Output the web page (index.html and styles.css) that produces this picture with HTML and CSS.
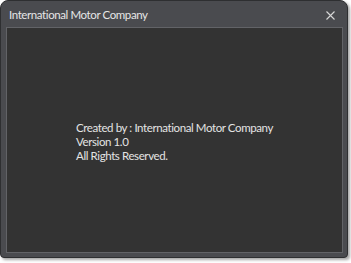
FILE: index.html
```html
<!DOCTYPE html>
<html>
<head>
<meta charset="utf-8">
<link rel="stylesheet" href="styles.css">
</head>
<body>
<div class="window">
  <div class="titlebar">
    <span class="title">International Motor Company</span>
    <span class="close" aria-label="Close">
      <svg width="9" height="9" viewBox="0 0 9 9"><path d="M0.5 0.5 L8.5 8.5 M8.5 0.5 L0.5 8.5" stroke="#d8d8d8" stroke-width="1.1" fill="none"/></svg>
    </span>
  </div>
  <div class="content">
    <div class="info">
      <div>Created by : International Motor Company</div>
      <div>Version 1.0</div>
      <div>All Rights Reserved.</div>
    </div>
  </div>
</div>
</body>
</html>
```
FILE: styles.css
```css
html, body {
  margin: 0;
  padding: 0;
  background: #ffffff;
}
body {
  width: 351px;
  height: 263px;
  font-family: Lato, "Noto Sans", sans-serif;
}
.window {
  width: 348px;
  height: 258px;
  box-sizing: border-box;
  background: #4a4b4f;
  border: 1px solid #2e2f31;
  border-radius: 8px 8px 4px 4px;
  box-shadow: 2px 2px 3px rgba(0, 0, 0, 0.35);
  display: flex;
  flex-direction: column;
}
.titlebar {
  height: 26px;
  flex: none;
  display: flex;
  align-items: center;
  justify-content: space-between;
  padding: 0 12px 0 8px;
}
.title {
  color: #e6e6e6;
  font-size: 11.5px;
  letter-spacing: -0.4px;
}
.close {
  display: flex;
  margin-top: 2px;
}
.content {
  flex: 1;
  margin: 0 4px 4px 5px;
  background: #333333;
  border: 1px solid #626367;
  display: flex;
  align-items: center;
  justify-content: center;
}
.info {
  color: #e4e4e4;
  font-size: 11.5px;
  line-height: 14px;
  letter-spacing: -0.4px;
  margin-top: 3px;
}
```
